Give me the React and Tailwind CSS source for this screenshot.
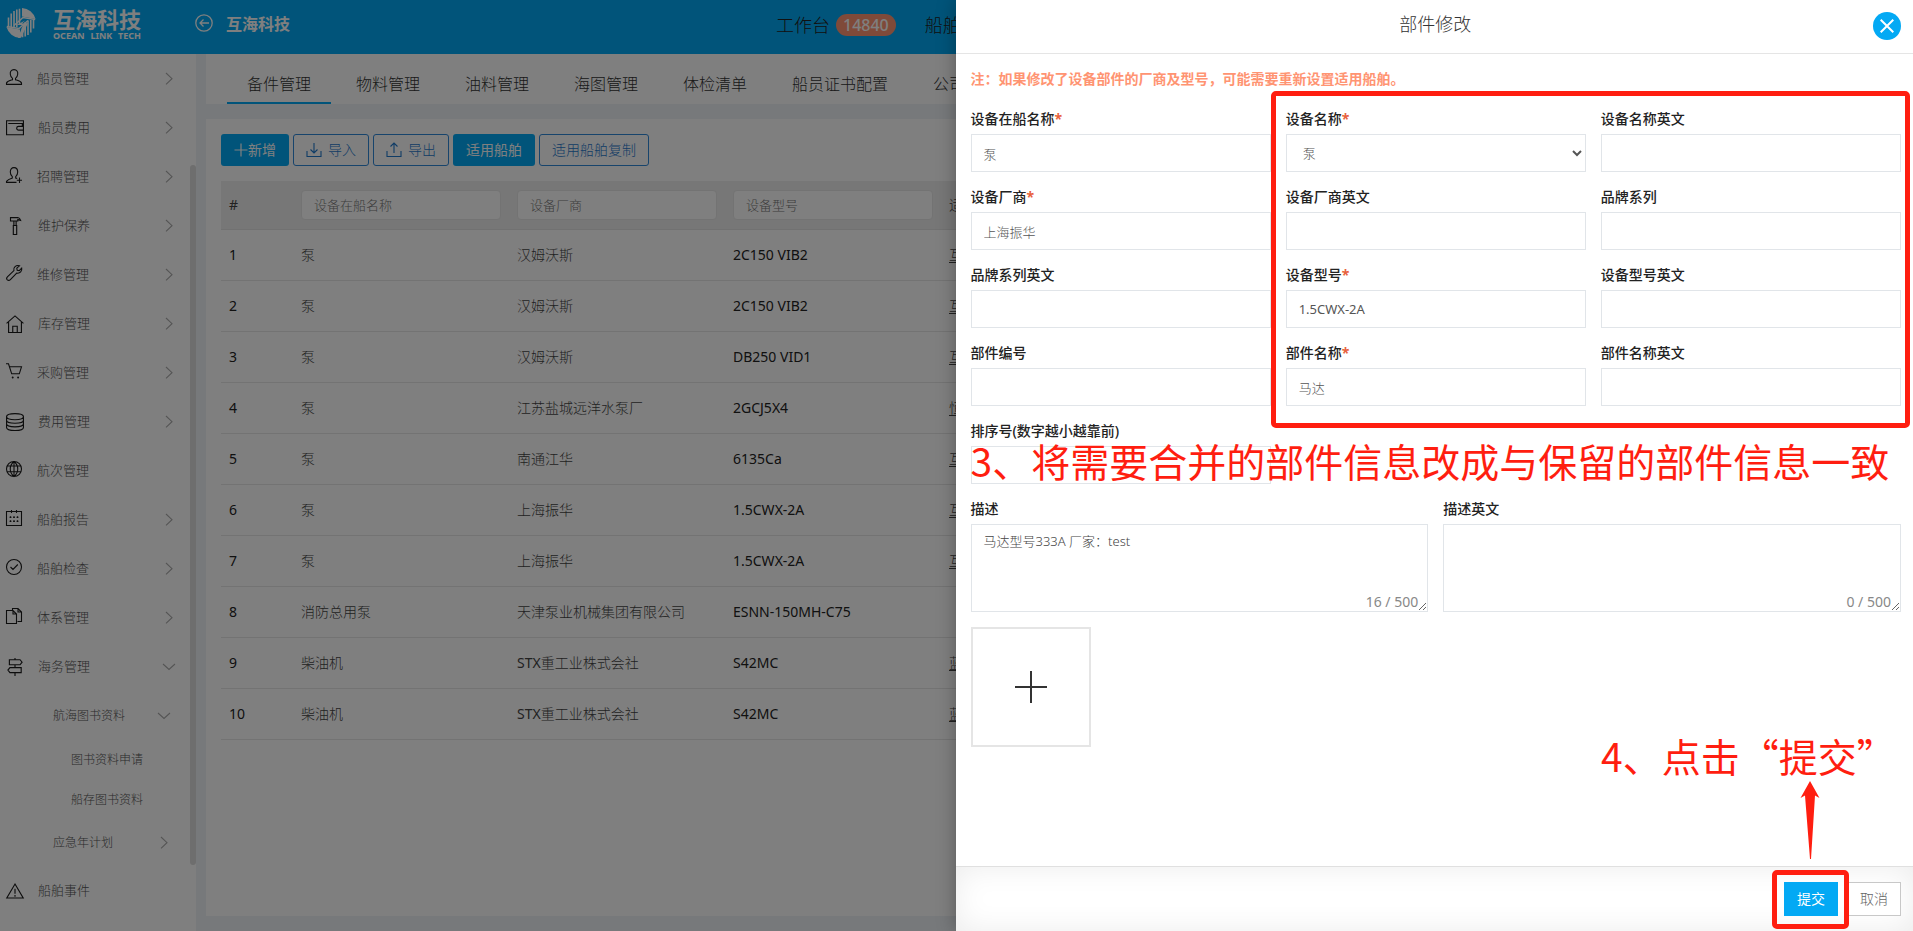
import React from "react";

const ICONS = {
  user: "M8 .6c-2.900 0-4 2.200-3.700 4.600.2 1.800 1 3.300 2.200 4.200v1.300c-2 .7-5.200 1.300-6 3.300v1.400h15v-1.400c-.8-2-4-2.600-6-3.300V9.400c1.200-.9 2-2.400 2.200-4.200C12 2.800 10.900.6 8 .6z",
  wallet: "M.5 1.500h15v12.500H.5zM2 4h12.500v2.500M15.500 1.500v5h-4.300a1.600 1.600 0 0 0 0 3.400h4.300",
  userPlus: "M10.500 15.400H.5v-1c1.500-2 4-2.700 5.800-3.300V9.600c-1.300-1.100-2-2.800-2-4.600C4.300 2.300 5.600.6 8 .6s3.700 1.700 3.700 4.400c0 1.800-.7 3.500-2 4.600v1.500l1.500.5M13.500 10.500v5.500M10.800 13.300H16",
  hammer: "M4 .5h6.500c1.500.3 2 1 2.500 2.500l-2.500-.7v1.200H4zM7 3.500v3.500M9 3.500v3.500M6.500 7.500h3v8h-3z",
  wrench: "M13.400.8 10.800 3.200l.4 2 2 .5 2.500-2.500c.6 2.800-1.600 5.600-5 4.900l-6.300 6.500c-1 1-2.300.9-3.100.2-.9-.9-.8-2.100.1-3l6.500-6.200C7 2.500 10-.2 13.400.8z",
  home: "M.5 7.500 8 .8l7.500 6.700M2.300 6v9.500h11.400V6M6 15.500V10h4v5.500",
  cart: "M0 .8h2.500l3.200 10h7.600l2.200-7H3.500M5.800 14.500h1.800M11.200 14.500H13M6.700 13.600v1.800M12.100 13.600v1.800",
  coins: "M8 .5c4.500 0 7.500 1 7.500 2.700S12.500 6 8 6 .5 5 .5 3.200 3.500.5 8 .5zM.5 3.200v9.600c0 1.700 3 2.700 7.500 2.700s7.500-1 7.500-2.700V3.200M.5 6.400C.5 8.100 3.500 9.100 8 9.100s7.500-1 7.500-2.700M.5 9.600c0 1.700 3 2.700 7.500 2.700s7.500-1 7.500-2.700",
  globe: "M8 .5a7.500 7.500 0 1 0 0 15 7.500 7.500 0 0 0 0-15zM8 .5v15M8 .5c-5 4-5 11 0 15 5-4 5-11 0-15M1.200 5h13.600M1.200 10.800h13.600",
  calendar: "M.5 1.500h15v14H.5zM5.500 0v3M10.500 0v3M3.500 7.200h2M7 7.200h2M10.500 7.200h2M3.500 11.200h2M7 11.200h2M10.500 11.200h2M4.500 6.300v1.800M8 6.300v1.800M11.500 6.300v1.800M4.500 10.300v1.800M8 10.300v1.800M11.500 10.300v1.800",
  check: "M8 .5a7.500 7.500 0 1 0 0 15 7.500 7.500 0 0 0 0-15zM4.500 8l2.500 2.500 4.800-5",
  files: "M6.500 2.500V.5H12L15.500 4v9.500h-4M12 .5V4h3.500M.5 2.500H7L10.500 6v9.500H.5zM7 2.500V6h3.500",
  sign: "M8 0v1.500M8 6v2.500M8 13v3M3 1.500h9.500l1.800 2.200L12.500 6H3zM13.500 8.500H3.500l-1.800 2.200L3.500 13h10z",
  warn: "M8 1.800 15.300 14.200H.7zM8 6v4.500M8 11.500v1.500",
  list: "M2 .5h12v15H2zM5 5.500h6",
};

const WIDE_ICONS = ["wallet", "hammer", "home", "coins", "sign", "warn", "list"];

function Icon({ name }) {
  const wide = WIDE_ICONS.includes(name);
  return (
    <svg
      viewBox="0 0 16 16"
      className={wide ? "mr-3.5 size-[18px] shrink-0 overflow-visible" : "mr-[15px] mb-1 size-4 shrink-0 overflow-visible"}
      fill="none"
      stroke="#1a1a1a"
      strokeWidth={wide ? "1" : "1.1"}
    >
      <path d={ICONS[name]} />
    </svg>
  );
}

function Chevron({ down = false }) {
  return (
    <svg viewBox="0 0 12 12" className="size-3 shrink-0 overflow-visible" fill="none" stroke="#aaa" strokeWidth="1.1">
      <path d={down ? "M0 3 6 8.500 12 3" : "M3 0l6 5.700-6 5.700"} />
    </svg>
  );
}

const MENU = [
  ["user", "船员管理", "right"],
  ["wallet", "船员费用", "right"],
  ["userPlus", "招聘管理", "right"],
  ["hammer", "维护保养", "right"],
  ["wrench", "维修管理", "right"],
  ["home", "库存管理", "right"],
  ["cart", "采购管理", "right"],
  ["coins", "费用管理", "right"],
  ["globe", "航次管理", null],
  ["calendar", "船舶报告", "right"],
  ["check", "船舶检查", "right"],
  ["files", "体系管理", "right"],
  ["sign", "海务管理", "down"],
];

function MenuItem({ icon, label, arrow }) {
  return (
    <button type="button" aria-label={label || "更多"} className="flex h-[49px] w-full shrink-0 items-center pr-[21px] pl-1.5 text-left text-[13px] text-[#555]">
      <Icon name={icon} />
      <span className="flex-1">{label}</span>
      {arrow && <Chevron down={arrow === "down"} />}
    </button>
  );
}

function Sidebar() {
  return (
    <aside className="relative flex w-[196px] shrink-0 flex-col overflow-hidden bg-white">
      {MENU.map(([icon, label, arrow]) => (
        <MenuItem key={label} icon={icon} label={label} arrow={arrow} />
      ))}
      <button type="button" className="flex h-[49px] shrink-0 items-center justify-between pr-[26px] pl-[53px] text-xs text-[#555]">
        航海图书资料
        <Chevron down />
      </button>
      <a href="#apply" className="flex h-10 shrink-0 items-center pl-[71px] text-xs text-[#555]">图书资料申请</a>
      <a href="#stock" className="flex h-10 shrink-0 items-center pl-[71px] text-xs text-[#555]">船存图书资料</a>
      <button type="button" className="flex h-[46px] shrink-0 items-center justify-between pr-[26px] pl-[53px] text-xs text-[#555]">
        应急年计划
        <Chevron />
      </button>
      <MenuItem icon="warn" label="船舶事件" />
      <MenuItem icon="list" label="" />
      <div className="absolute top-[111px] right-0 h-[700px] w-1.5 rounded-full bg-[#dcdcdc]" />
    </aside>
  );
}

function Logo() {
  return (
    <svg viewBox="0 0 30 30" className="size-[30px]" fill="none">
      <path fill="#fff" d="M16 0a15 15 0 0 1 13.500 11L16 8.500zM14 30A15 15 0 0 1 .5 19L14 21.500z" />
      <path fill="#fff" d="M19 12.500 10.500 17 17 17 12 30l3-.2L22 15l-6 .500z" />
      <path stroke="#fff" strokeWidth="1.600" d="M13.500.800v16M10.800 1.500V19M8 3v16.500M5.200 5.500v13.500M2.500 9.500v9M16.500 29.200v-9M19.200 28.500V14M22 27V12.500M24.800 24.500V12M27.500 20.500V12" />
      <path stroke="#fff" strokeWidth="1.500" d="M.8 18.500 13 20.500 22 12.500M29.200 11.500 17 9.500 8 17.500" />
    </svg>
  );
}

function Header() {
  return (
    <header className="flex h-[54px] shrink-0 items-center bg-[#03a9f4] text-white">
      <div className="flex w-[195px] shrink-0 items-center pb-2 pl-1.5">
        <Logo />
        <div className="ml-[17px] flex flex-col">
          <span className="text-[22px] leading-6 font-bold">互海科技</span>
          <span className="flex justify-between text-[9px] leading-[9px] font-bold">
            <span>OCEAN</span> <span>LINK</span> <span>TECH</span>
          </span>
        </div>
      </div>
      <svg viewBox="0 0 18 18" className="mb-2 size-[18px] shrink-0" fill="none" stroke="#fff" strokeWidth="1.300">
        <circle cx="9" cy="9" r="8.200" />
        <path d="M14 9H5M8.500 5.500 5 9l3.500 3.500" />
      </svg>
      <span className="ml-[13px] mb-1.5 shrink-0 text-base font-bold">互海科技</span>
      <nav className="mb-1 ml-[486px] flex shrink-0 items-center text-lg text-[#222]">
        <a href="#work">工作台</a>
        <span className="ml-1.5 h-[22px] rounded-full bg-[#ff9472] px-[7px] text-base leading-[22px] font-medium text-white">14840</span>
        <a href="#ship" className="ml-[29px]">船舶</a>
      </nav>
    </header>
  );
}

const TABS = ["备件管理", "物料管理", "油料管理", "海图管理", "体检清单", "船员证书配置", "公司"];

const ROWS = [
  ["泵", "汉姆沃斯", "2C150 VIB2", "互"],
  ["泵", "汉姆沃斯", "2C150 VIB2", "互"],
  ["泵", "汉姆沃斯", "DB250 VID1", "互"],
  ["泵", "江苏盐城远洋水泵厂", "2GCJ5X4", "恒"],
  ["泵", "南通江华", "6135Ca", "互"],
  ["泵", "上海振华", "1.5CWX-2A", "互"],
  ["泵", "上海振华", "1.5CWX-2A", "互"],
  ["消防总用泵", "天津泵业机械集团有限公司", "ESNN-150MH-C75", ""],
  ["柴油机", "STX重工业株式会社", "S42MC", "蓝"],
  ["柴油机", "STX重工业株式会社", "S42MC", "蓝"],
];

/* Latin runs carry the regular weight, Chinese runs the light one. */
function Mixed({ text }) {
  return text.split(/([A-Za-z0-9]+)/).map((part, i) =>
    i % 2 ? <span key={i} className="font-normal">{part}</span> : part
  );
}

const OUTLINE = "flex h-8 items-center rounded-[3px] border border-[#2f88d8] px-3 text-sm text-[#1f78cc]";
const SOLID = "flex h-8 items-center rounded-[3px] bg-[#03a9f4] px-[13px] text-sm font-normal text-white";

function Tray({ up = false }) {
  return (
    <svg viewBox="0 0 16 16" className="mr-1.5 size-4" fill="none" stroke="#1f78cc" strokeWidth="1.1">
      <path d="M1 9v5.500h14V9" />
      <path d={up ? "M8 11V1M4.500 4.500 8 1l3.500 3.500" : "M8 1v10M4.500 7.500 8 11l3.500-3.500"} />
    </svg>
  );
}

function Main() {
  return (
    <main className="flex min-w-0 flex-1 flex-col bg-[#eef2f6] pb-[15px] pl-2.5">
      <nav className="flex h-[50px] shrink-0 gap-[5px] overflow-hidden bg-white pl-[21px]">
        {TABS.map((t, i) => (
          <a key={t} href={"#tab" + i} className={"flex shrink-0 items-center border-b-2 px-5 pt-3 text-base text-[#333] " + (i === 0 ? "border-[#03a9f4]" : "border-transparent")}>
            {t}
          </a>
        ))}
      </nav>
      <section className="mt-[15px] flex-1 overflow-hidden bg-white p-[15px]">
        <div className="flex gap-1">
          <button type="button" className={SOLID}>
            <svg viewBox="0 0 14 14" className="size-3.5" stroke="#fff" strokeWidth="1.200"><path d="M7 .5v13M.5 7h13" /></svg>
            新增
          </button>
          <button type="button" className={OUTLINE}><Tray />导入</button>
          <button type="button" className={OUTLINE}><Tray up />导出</button>
          <button type="button" className={SOLID}>适用船舶</button>
          <button type="button" className={OUTLINE}>适用船舶复制</button>
        </div>
        <table className="mt-[15px] w-full table-fixed border-collapse text-left text-sm text-[#444]">
          <colgroup>
            <col className="w-[72px]" />
            <col className="w-[216px]" />
            <col className="w-[216px]" />
            <col className="w-[216px]" />
            <col />
          </colgroup>
          <thead>
            <tr className="h-12 border-b border-[#e2e2e2] bg-[#eee]">
              <th className="px-2 font-normal">#</th>
              {["设备在船名称", "设备厂商", "设备型号"].map((h) => (
                <th key={h} className="px-2 font-normal">
                  <input aria-label={h} placeholder={h} className="block h-[30px] w-full rounded border border-[#e6e6e6] bg-white px-3 text-[13px] font-light placeholder:text-[#777]" />
                </th>
              ))}
              <th className="px-2 font-light">适</th>
            </tr>
          </thead>
          <tbody>
            {ROWS.map((r, i) => (
              <tr key={i} className="h-[51px] border-b border-[#e6e6e6]">
                <td className="px-2 font-normal text-[#222]">{i + 1}</td>
                <td className="px-2">{r[0]}</td>
                <td className="px-2"><Mixed text={r[1]} /></td>
                <td className="px-2 font-normal text-[#222]">{r[2]}</td>
                <td className="px-2 underline underline-offset-2">{r[3]}</td>
              </tr>
            ))}
          </tbody>
        </table>
      </section>
    </main>
  );
}

const FIELDS = [
  ["设备在船名称", true, "泵"],
  ["设备名称", true, "泵", "select"],
  ["设备名称英文", false, ""],
  ["设备厂商", true, "上海振华"],
  ["设备厂商英文", false, ""],
  ["品牌系列", false, ""],
  ["品牌系列英文", false, ""],
  ["设备型号", true, "1.5CWX-2A", "latin"],
  ["设备型号英文", false, ""],
  ["部件编号", false, ""],
  ["部件名称", true, "马达"],
  ["部件名称英文", false, ""],
  ["排序号(数字越小越靠前)", false, ""],
];

const LABEL = "block h-5 text-sm leading-5 font-medium text-[#222]";
const BOX = "mt-[5px] block h-[38px] w-full border border-[#e1e5e9] bg-white pl-3 text-[13px] text-[#555]";

function Field({ id, label, required, value, kind }) {
  return (
    <div>
      <label htmlFor={id} className={LABEL}>
        {label}
        {required && <span className="font-bold text-[#e8623d]">*</span>}
      </label>
      {kind === "select" ? (
        <select id={id} defaultValue={value} className={BOX}>
          <option>{value}</option>
        </select>
      ) : (
        <input id={id} defaultValue={value} className={BOX + (kind === "latin" ? " font-normal" : "")} />
      )}
    </div>
  );
}

function Area({ id, label, value, count }) {
  return (
    <div className="relative">
      <label htmlFor={id} className={LABEL}>{label}</label>
      <textarea id={id} defaultValue={value} className="mt-[5px] block h-[88px] w-full resize-y border border-[#e1e5e9] bg-white px-3 py-1.5 text-[13px] leading-5 text-[#444]" />
      <span className="absolute right-2.5 bottom-0 text-sm leading-5 font-normal text-[#888]">{count} / 500</span>
    </div>
  );
}

const NOTE = "pointer-events-none absolute font-[Noto_Sans_CJK_SC,sans-serif] text-[39px] leading-10 font-normal whitespace-nowrap text-[#ff1e10]";

function Drawer() {
  return (
    <div role="dialog" aria-label="部件修改" className="absolute inset-y-0 right-0 flex w-[calc(50%+1px)] flex-col bg-white shadow-[0_0_18px_rgba(0,0,0,0.3)]">
      <div className="relative flex h-[54px] shrink-0 items-center justify-center border-b border-[#e5e5e5] pb-1.5 pl-0.5">
        <h1 className="text-lg text-[#333]">部件修改</h1>
        <button type="button" aria-label="关闭" className="absolute top-3 right-3 flex size-7 items-center justify-center rounded-full bg-[#03a9f4]">
          <svg viewBox="0 0 14 14" className="size-3.5" stroke="#fff" strokeWidth="2"><path d="M.7.7l12.600 12.600M13.300.7.7 13.300" /></svg>
        </button>
      </div>
      <form className="flex-1 pt-[15px] pr-3 pl-[15px]">
        <p className="mb-5 text-sm leading-5 font-bold text-[#ff9472]">注：如果修改了设备部件的厂商及型号，可能需要重新设置适用船舶。</p>
        <div className="grid grid-cols-3 gap-[15px]">
          {FIELDS.map(([label, required, value, kind], i) => (
            <Field key={label} id={"field" + i} label={label} required={required} value={value} kind={kind} />
          ))}
        </div>
        <div className="mt-[15px] grid grid-cols-2 gap-[15px]">
          <Area id="desc" label="描述" value="马达型号333A 厂家：test" count={16} />
          <Area id="descEn" label="描述英文" value="" count={0} />
        </div>
        <button type="button" aria-label="添加附件" className="mt-[15px] flex size-[120px] items-center justify-center border-2 border-[#e5e5e5]">
          <svg viewBox="0 0 32 32" className="size-8" stroke="#333" strokeWidth="2"><path d="M16 0v32M0 16h32" /></svg>
        </button>
      </form>
      <div className="flex h-[65px] shrink-0 items-start justify-end gap-[9px] border-t border-[#e0e0e0] pt-[15px] pr-3 text-sm shadow-[inset_0_0_30px_rgba(0,0,0,0.08)]">
        <button type="button" className="h-[34px] w-[54px] bg-[#03a9f4] font-normal text-white">提交</button>
        <button type="button" className="h-[34px] w-[54px] border border-[#c8c8c8] bg-white text-[#666]">取消</button>
      </div>

      <div className="pointer-events-none absolute top-[91px] right-[3px] left-[315px] h-[337px] rounded-[5px] border-5 border-[#ff1e10]" />
      <p className={NOTE + " top-[440px] left-[15px]"}>3、将需要合并的部件信息改成与保留的部件信息一致</p>
      <p className={NOTE + " right-2 bottom-[156px] w-[304px]"}>4、点击“提交”</p>
      <svg viewBox="0 0 20 78" className="pointer-events-none absolute right-[93px] bottom-[72px] h-[78px] w-5" fill="#ff1e10">
        <path d="M10 0 19.500 17 15 14.500 11 78h-1L5 14.500.5 17z" />
      </svg>
      <div className="pointer-events-none absolute right-16 bottom-0.5 h-[59px] w-[77px] rounded-[5px] border-5 border-[#ff1e10]" />
    </div>
  );
}

export default function App() {
  return (
    <div lang="zh-CN" className="relative flex h-screen flex-col overflow-hidden font-['Noto_Sans','Noto_Sans_CJK_SC',sans-serif] font-light">
      <Header />
      <div className="flex min-h-0 flex-1">
        <Sidebar />
        <Main />
      </div>
      <div className="absolute inset-0 bg-black/50" />
      <Drawer />
    </div>
  );
}
